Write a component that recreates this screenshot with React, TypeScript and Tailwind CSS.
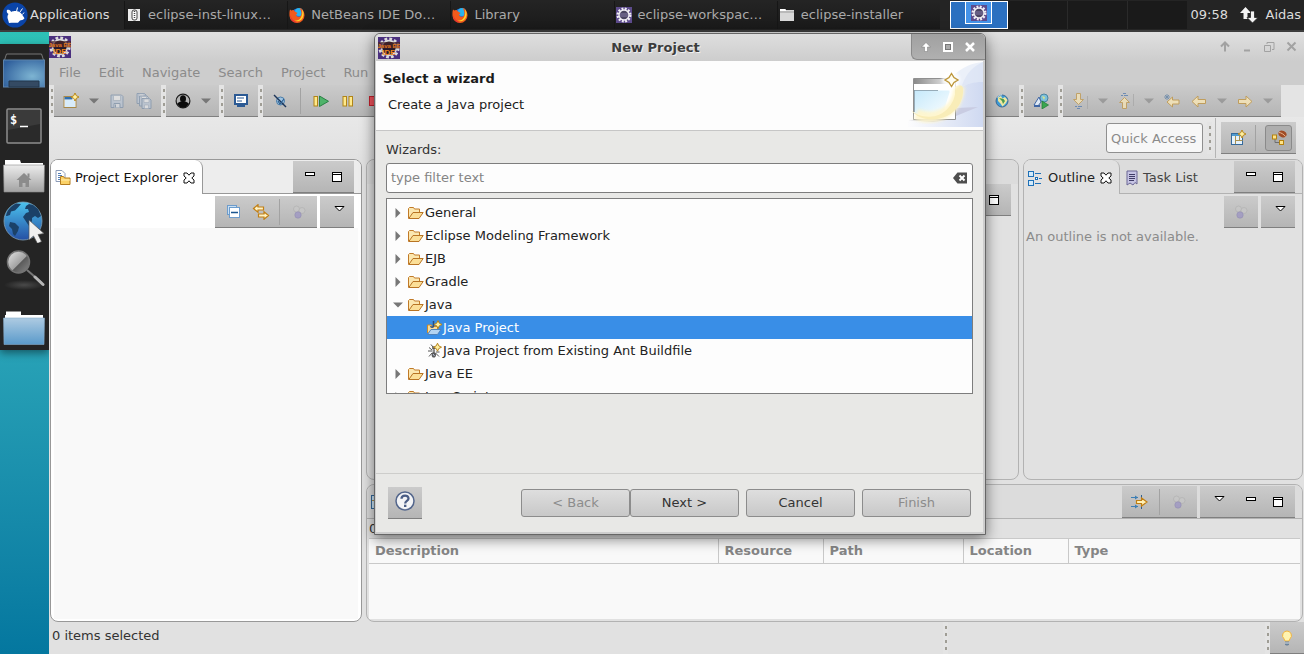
import React from "react";

type Kids = { children?: React.ReactNode };

/* ---------- small drawings ---------- */

const Svg = ({ w = 16, h = 16, className = "", children }: Kids & { w?: number; h?: number; className?: string }) => (
  <svg width={w} height={h} viewBox={`0 0 ${w} ${h}`} className={`block shrink-0 ${className}`} aria-hidden="true">
    {children}
  </svg>
);

const XfceMouse = () => (
  <Svg w={26} h={26}>
    <circle cx="13" cy="13" r="12.6" fill="#0a44a8" />
    <path d="M5 8c2-1 3.500.2 4.200 2 .6-.8 1.400-1 2.300-.8 3-.6 7.500.4 9.500 4.800l1.500 2.200-1.500 1.600-3 .6-2 2.400H9.500L7 21l-1-3.500C5 15.500 5.500 13 6.500 12 5 11 4.300 9.500 5 8z" fill="#fff" />
    <path d="M14.500 9.500l1-4M18 10l2.500-3.500M20.500 12.500l1.500-2" stroke="#fff" strokeWidth="1" />
  </Svg>
);

const ArchiveIcon = () => (
  <Svg>
    <rect x="2" y="2" width="12" height="12" fill="#ececec" />
    <rect x="6" y="3" width="5" height="10" rx="2" fill="#fff" stroke="#444" />
    <path d="M8.500 4v8" stroke="#444" strokeWidth="1.500" strokeDasharray="1 1" />
  </Svg>
);

const Firefox = () => (
  <Svg>
    <circle cx="8.500" cy="8" r="6.500" fill="#2a6fd6" />
    <circle cx="10" cy="5" r="4" fill="#28b4f0" />
    <path d="M1 2.500l1.500 1C4 2.500 5 3 6 4.500L8.500 6 7 8c1 2.500 4 2 5 .5C13 6 12 3 10.500.8c3 1 5 4 5 7.500A7.600 7.600 0 0 1 8 16 7.500 7.500 0 0 1 .5 9C.3 6 .6 4 1 2.500z" fill="#f25a1c" />
    <path d="M13 2.500c2.500 3 2 8-1 10.500-2 1.600-5 1.800-7 .6 3 .2 5.500-.6 7-3.100 1.300-2.500 1.500-5 1-8z" fill="#ffd42a" />
    <path d="M1.500 8c.5 4 3 6.500 7 7.400C4.500 16 1 13 1.500 8z" fill="#e8283c" />
  </Svg>
);

const GearIcon = () => (
  <Svg>
    <rect width="16" height="16" fill="#5d4b8c" />
    <circle cx="8" cy="8" r="6.300" fill="none" stroke="#f0eef4" strokeWidth="2.400" strokeDasharray="1.900 1.400" />
    <circle cx="8" cy="8" r="5" fill="#4a4462" stroke="#f0eef4" strokeWidth="1.400" />
    <path d="M4 7h8M4 9h8" stroke="#8379a6" strokeWidth="1" />
  </Svg>
);

const TaskFolder = () => (
  <Svg>
    <path d="M1 2h5l1 1h8v11H1z" fill="#d8d8d8" />
    <path d="M1 2h5l1 1v1H1z" fill="#fff" />
    <path d="M1 5h14" stroke="#9a9a9a" />
  </Svg>
);

const NetArrows = () => (
  <Svg w={18} h={18}>
    <path d="M5.500 1L0 7h3.500v6h4V7H11z" fill="#f4f4f4" />
    <path d="M12.500 17L7 11.500h3.500V5h4v6.500H18z" fill="#f4f4f4" stroke="#242424" strokeWidth=".8" />
  </Svg>
);

const EclipseIde = () => (
  <Svg w={22} h={22}>
    <rect width="22" height="22" fill="#4a2f7e" />
    <circle cx="11" cy="11" r="9.300" fill="none" stroke="#dcdcdc" strokeWidth="2.600" strokeDasharray="2.800 2.070" />
    <circle cx="11" cy="11" r="7.400" fill="#231a2c" stroke="#dcdcdc" strokeWidth="1.600" />
    <path d="M0 5h22v6.500H0z" fill="#4a2426" opacity=".7" />
    <text x="11" y="11" textAnchor="middle" fontSize="6" fontWeight="700" fontFamily="Liberation Sans, sans-serif" fill="#e0761e">Java EE</text>
    <text x="11" y="17.500" textAnchor="middle" fontSize="8" fontWeight="700" fontFamily="Liberation Sans, sans-serif" fill="#f0861e">IDE</text>
  </Svg>
);

const Spark = ({ x, y }: { x: number; y: number }) => (
  <path d={`M${x} ${y - 4}l1.300 2.700 2.700 1.300-2.700 1.300-1.300 2.700-1.300-2.700-2.700-1.300 2.700-1.300z`} fill="#fff0a0" stroke="#b8861c" strokeWidth="1" />
);

const NewIcon = () => (
  <Svg>
    <rect x="1" y="3.500" width="12" height="11" fill="#fff" stroke="#a8894a" />
    <path d="M1.500 4h8v2.500h-8z" fill="#2f6fb0" />
    <path d="M2 7h10v7H2z" fill="#d8ecfa" />
    <Spark x={12} y={4} />
  </Svg>
);

const floppy = "M.5.500h10.500l1.500 1.500v11h-12z";
const SaveIcon = () => (
  <Svg className="opacity-60">
    <g transform="translate(1.500 1.500)">
      <path d={floppy} fill="#b9c7d9" stroke="#7189a6" />
      <path d="M3 1h7v5H3z" fill="#f1f1f1" stroke="#8fa0b5" strokeWidth=".7" />
      <path d="M3.500 13V9h6v4" fill="#e0e4ea" stroke="#7189a6" />
      <path d="M5 10v3" stroke="#7189a6" />
    </g>
  </Svg>
);
const SaveAllIcon = () => (
  <Svg className="opacity-60">
    {[0, 2.5, 5].map((o) => (
      <g key={o} transform={`translate(${o} ${o})`}>
        <path d="M1 .500h7.500l1.500 1.500v8.500H1z" fill="#b9c7d9" stroke="#7189a6" />
        <path d="M3 1h5v3.500H3zM3.500 7h4v3.500h-4z" fill="#eef0f2" stroke="#8fa0b5" strokeWidth=".6" />
      </g>
    ))}
  </Svg>
);
const UserIcon = () => (
  <Svg>
    <circle cx="8" cy="8" r="6.900" fill="#b4b4b4" stroke="#1c1c1c" strokeWidth="1.200" />
    <path d="M2.300 10.500c1-1.300 2.500-1.500 3.700-2 1.300.8 2.700.8 4 0 1.200.5 2.700.7 3.700 2-1.200 3-3.400 4.200-5.700 4.200s-4.500-1.200-5.700-4.200z" fill="#0c0c0c" />
    <ellipse cx="8" cy="5.700" rx="3" ry="3.500" fill="#0c0c0c" />
  </Svg>
);
const MonitorIcon = () => (
  <Svg>
    <path d="M2 2h12v9H2z" fill="#fff" stroke="#2c5a94" strokeWidth="2" />
    <path d="M4 5h7M4 8h5" stroke="#2c5a94" />
    <path d="M4 12h8v2H4z" fill="#2c5a94" />
  </Svg>
);
const SkipIcon = () => (
  <Svg>
    <circle cx="8.500" cy="8" r="4" fill="#9fc3e0" stroke="#4a7ca8" />
    <path d="M2 2l12 12" stroke="#1d3558" strokeWidth="1.400" />
    <path d="M6 8l2 3 4-5" fill="none" stroke="#275d90" strokeWidth="1.200" />
  </Svg>
);
const ResumeIcon = () => (
  <Svg>
    <rect x="1" y="3.500" width="3.500" height="9.500" fill="#ffe98a" stroke="#b08418" />
    <path d="M6.500 3v10.500l9-5.200z" fill="#4fb36a" stroke="#2a8045" />
  </Svg>
);
const PauseIcon = () => (
  <Svg>
    <rect x="3" y="3.500" width="3.500" height="9.500" fill="#ffe98a" stroke="#b08418" />
    <rect x="9" y="3.500" width="3.500" height="9.500" fill="#ffe98a" stroke="#b08418" />
  </Svg>
);
const StopIcon = () => (
  <Svg>
    <rect x="2.500" y="3.500" width="9" height="9" fill="#f0525c" stroke="#c2202c" />
  </Svg>
);
const WorldIcon = () => (
  <Svg>
    <circle cx="8" cy="8" r="6" fill="#3f9bd8" stroke="#3d6c94" />
    <path d="M4 4.500l3-1.500 1.500 2.500L11 4l2.500 3-1.500 3-3.500 3.500-2-3L4 8z" fill="#eee8a0" />
    <path d="M5 5l3 3 1 3 2-3-1.500-2z" fill="#4b9c52" />
    <path d="M3.500 4.500c1-1.500 2.500-2.500 4.500-2.700" fill="none" stroke="#cfeaf8" />
  </Svg>
);
const ServiceIcon = () => (
  <Svg>
    <circle cx="11" cy="5" r="4" fill="#7cc0dc" stroke="#4a84a0" />
    <path d="M9 3l3 1-1 3z" fill="#d9e38b" />
    <path d="M1 12l5-8 2 5-3 4z" fill="#dfe9f5" stroke="#3f66a4" />
    <path d="M1 13h6" stroke="#3f66a4" strokeWidth="2" />
    <path d="M9 8v8l6.500-4z" fill="#3ba650" stroke="#1f7a35" strokeWidth=".7" />
  </Svg>
);
const arrowFill = { fill: "#f3e3b8", stroke: "#c09a52" };
const NextAnn = () => (
  <Svg w={18} className="opacity-80">
    <path d="M5.500.500h4v6h3l-5 5-5-5h3z" {...arrowFill} />
    <path d="M4 13.500h2M7 13.500h4M6 15.500h3" stroke="#5a7fb0" />
    <path d="M16.500 3v13" stroke="#a8a8a8" />
  </Svg>
);
const PrevAnn = () => (
  <Svg w={18} className="opacity-80">
    <path d="M5.500 15.500h4v-6h3l-5-5-5 5h3z" {...arrowFill} />
    <path d="M4 2.500h2M7 2.500h4M6 .500h3" stroke="#5a7fb0" />
    <path d="M16.500 1v12" stroke="#a8a8a8" />
  </Svg>
);
const BackIcon = () => (
  <Svg className="opacity-90">
    <path d="M1 8.500l6-5.500v3.500h7.500v4H7V14z" {...arrowFill} />
  </Svg>
);
const ForwardIcon = () => (
  <Svg className="opacity-90">
    <path d="M15 8.500L9 3v3.500H1.500v4H9V14z" {...arrowFill} />
  </Svg>
);
const LastEditIcon = () => (
  <Svg className="opacity-90">
    <path d="M3 9l5.500-5v3H15v4H8.500v3z" {...arrowFill} />
    <path d="M3 1v6M0 4h6M1 2l4 4M5 2L1 6" stroke="#6b89a8" strokeWidth=".9" />
  </Svg>
);
const DropArrow = ({ dim = false }: { dim?: boolean }) => (
  <Svg w={10} h={6} className={dim ? "opacity-50" : ""}>
    <path d="M0 .500h10L5 5.500z" fill="#777" />
  </Svg>
);

const MinIcon = () => (
  <Svg w={10} h={10}>
    <rect x=".5" y=".5" width="9" height="3" fill="#fff" stroke="#000" />
  </Svg>
);
const MaxIcon = () => (
  <Svg w={10} h={10}>
    <rect x=".5" y=".5" width="9" height="9" fill="#fff" stroke="#000" />
    <path d="M0 2.500h10" stroke="#000" />
  </Svg>
);
const MenuTri = () => (
  <Svg w={11} h={6}>
    <path d="M1 .500h9L5.500 5z" fill="#fff" stroke="#000" />
  </Svg>
);
const CollapseIcon = () => (
  <Svg>
    <rect x="1.500" y="1.500" width="9" height="9" fill="#c9e0f4" stroke="#6d9ccc" />
    <rect x="3.500" y="3.500" width="10" height="10" fill="#fff" stroke="#6d9ccc" />
    <path d="M5 8.500h7" stroke="#1b568f" strokeWidth="1.500" />
  </Svg>
);
const LinkIcon = () => (
  <Svg w={18}>
    <path d="M1.500 4.500L6 .7v2.300h5.500v3H6v2.300z" fill="#fff3c4" stroke="#c17f14" strokeWidth="1.200" />
    <path d="M16.500 11.500L12 7.700v2.300H6.500v3H12v2.300z" fill="#fff3c4" stroke="#c17f14" strokeWidth="1.200" />
  </Svg>
);
const FocusIcon = () => (
  <Svg className="opacity-70">
    <circle cx="5.500" cy="5" r="3" fill="#c8c8c8" stroke="#a4a4a4" strokeWidth=".6" />
    <circle cx="11" cy="6.500" r="3" fill="#c8c8c8" stroke="#a4a4a4" strokeWidth=".6" />
    <circle cx="7" cy="11" r="3.200" fill="#9a92c4" stroke="#8079ad" strokeWidth=".6" />
  </Svg>
);
const ViewX = () => (
  <Svg w={12} h={12}>
    <path d="M1 1h3l2 2.200L8 1h3v3L8.800 6 11 8v3H8L6 8.800 4 11H1V8l2.200-2L1 4z" fill="#fff" stroke="#111" />
  </Svg>
);
const ExplorerIcon = () => (
  <Svg>
    <path d="M1 .500h6l3 3v8H1z" fill="#fff" stroke="#8d9cb8" />
    <path d="M3 3.500h3M3 5.500h4M3 7.500h3M3 9.500h2" stroke="#5580b8" />
    <path d="M5.500 14.500v-8h3l1 1.500h5.500v6.500z" fill="#fbd268" stroke="#b47d20" />
    <path d="M6 10h9" stroke="#ffeeb0" />
  </Svg>
);
const OutlineIcon = () => (
  <Svg>
    <rect x="1.500" y="1.500" width="5" height="5" fill="#d4ebfb" stroke="#1d70b8" />
    <rect x="1.500" y="10.500" width="5" height="5" fill="#d4ebfb" stroke="#1d70b8" />
    <path d="M8 3.500h6M12 8.500h3M8 13.500h6" stroke="#1d70b8" />
    <rect x="8.500" y="7.500" width="2" height="2" fill="#fff" stroke="#1d70b8" />
  </Svg>
);
const TaskListIcon = () => (
  <Svg w={12}>
    <path d="M1 1h10v13l-2-1.500L7 15l-3-2-3 2z" fill="#c6c4e4" stroke="#6b6794" />
    <path d="M3 4.500h6M3 6.500h6M3 8.500h6M3 10.500h5" stroke="#3f3b66" />
  </Svg>
);
const PerspectiveIcon = () => (
  <Svg>
    <rect x="1.500" y="3.500" width="11" height="11" fill="#e6f2fb" stroke="#356a9c" />
    <path d="M2 5h10" stroke="#4f9bd0" strokeWidth="2" />
    <path d="M5.500 6v8M5.500 10.500h7M9.500 6v4" stroke="#a89152" />
    <Spark x={12} y={4} />
  </Svg>
);
const JavaEeIcon = () => (
  <Svg>
    <path d="M4 6v6.500h5" fill="none" stroke="#6e6e6e" />
    <rect x="1.500" y="5" width="4" height="4" fill="#ffe48a" stroke="#b5830f" />
    <rect x="8.500" y="10.500" width="4" height="4" fill="#ffe48a" stroke="#b5830f" />
    <ellipse cx="11.500" cy="4" rx="4.200" ry="3.200" transform="rotate(25 11.500 4)" fill="#a04c26" />
    <path d="M8 2.500c2 0 5 2 6.500 4" fill="none" stroke="#f0c098" strokeWidth=".9" />
  </Svg>
);
const SyncFilter = () => (
  <Svg w={17}>
    <path d="M0 3.500h7M0 12.500h7" stroke="#3d7fb5" />
    <path d="M4 1.500l3 2-3 2M4 10.500l3 2-3 2" fill="#3d7fb5" />
    <path d="M10.500 1v4M10.500 11v4" stroke="#2f5f90" />
    <path d="M5.500 6.500h5V4l5.500 4-5.500 4V9.500h-5z" fill="#fff1b8" stroke="#c17f14" strokeWidth="1.200" />
  </Svg>
);
const Bulb = () => (
  <Svg>
    <path d="M8 1a4.500 4.500 0 0 1 3 7.800L10 11H6L5 8.800A4.500 4.500 0 0 1 8 1z" fill="#fff3b0" stroke="#f2b43c" />
    <path d="M6 11.500h4v3l-1 1H7l-1-1z" fill="#6d8298" />
    <path d="M6 13h4" stroke="#d6dde4" />
  </Svg>
);
const MarkersIcon = () => (
  <Svg>
    <rect x="1.500" y="1.500" width="12" height="13" fill="#cde6f8" stroke="#356a9c" />
    <path d="M2 6.500h11" stroke="#a89152" />
  </Svg>
);

const FolderIcon = () => (
  <Svg>
    <path d="M.5 13.500v-10l1-1h4l1 1.500h5v3.500" fill="#fbe7b0" stroke="#c17a28" />
    <path d="M.8 13.500l4.200-6h10.200l-4.200 6z" fill="#fbdf98" stroke="#b87424" />
  </Svg>
);
const JavaProjectIcon = () => (
  <Svg>
    <path d="M1.500 13v-8h4l1 1.500h5V9" fill="#f9dd9a" stroke="#c98a2c" />
    <path d="M1.500 14.500l3.500-5h10l-3.500 5z" fill="#b4d4f2" stroke="#4f82bb" />
    <path d="M7.500 1v5c0 1.500-2.500 1.500-3 .3" fill="none" stroke="#2d4f7c" strokeWidth="1.500" />
    <Spark x={12} y={4.500} />
  </Svg>
);
const AntIcon = () => (
  <Svg>
    <path d="M3 4.500l3 2.500M2 8h4M3 13.500l3-3.500M13 13.500l-3.500-3.500M13.500 9H10M5 1.500l2 2.500" stroke="#555" />
    <ellipse cx="7.800" cy="5" rx="1.800" ry="1.800" fill="#5a5a5a" />
    <circle cx="7.800" cy="8" r="1.400" fill="#8a8a8a" />
    <ellipse cx="7.800" cy="11.800" rx="2.200" ry="2.800" fill="#5a5a5a" />
    <path d="M7 11l1.500 2" stroke="#b8c4e0" />
    <Spark x={11.5} y={4.200} />
  </Svg>
);
const ClearIcon = () => (
  <Svg>
    <path d="M1 8l4.500-5.500H15v11H5.500z" fill="#4e4e4e" />
    <path d="M7.500 5.500l5 5M12.500 5.500l-5 5" stroke="#fff" strokeWidth="2" />
  </Svg>
);
const HelpIcon = () => (
  <Svg w={20} h={20}>
    <circle cx="10" cy="10" r="9" fill="#f3f4f6" stroke="#53668c" strokeWidth="1.500" />
    <path d="M6.500 7.800C6.500 3.500 13.500 3.500 13.500 7.500c0 2.500-3.300 2.300-3.300 5" fill="none" stroke="#4a5d85" strokeWidth="2.300" />
    <rect x="9" y="13.700" width="2.400" height="2.300" fill="#4a5d85" />
  </Svg>
);
const WizardBanner = () => (
  <Svg w={75} h={65}>
    <defs>
      <linearGradient id="bn1" x1="0" x2="1" y1="0" y2="0">
        <stop offset="0" stopColor="#fcfcfd" />
        <stop offset="1" stopColor="#cfd9f1" />
      </linearGradient>
      <linearGradient id="bn2" x1="0" y1="0" x2="1" y2="1">
        <stop offset="0" stopColor="#c6e9fb" />
        <stop offset="1" stopColor="#fbfeff" />
      </linearGradient>
      <linearGradient id="bn3" x1="0" x2="1">
        <stop offset="0" stopColor="#8a8a8a" />
        <stop offset="1" stopColor="#f4f4f4" />
      </linearGradient>
      <filter id="bn4" x="-20%" y="-20%" width="140%" height="140%">
        <feGaussianBlur stdDeviation="1.500" />
      </filter>
    </defs>
    <path d="M75 0v65H0v-6l48-2C50 30 55 8 75 0z" fill="url(#bn1)" />
    <path d="M44 15C55 4 65 1 75 0v20c-10 0-16 2-22 6z" fill="#e3e9f7" opacity=".7" />
    <path d="M48 46l22-1-22 9z" fill="#c9cce2" />
    <path d="M0 58l45-1-20 3z" fill="#c8c9d4" />
    <path d="M5.500 16.500h42v41h-42z" fill="#fff" stroke="#909090" />
    <path d="M6 17h40v5H6z" fill="url(#bn3)" />
    <path d="M6.500 28.500h35v2L36 48l-10 6-19.500-2z" fill="url(#bn2)" />
    <path d="M6 28.500h24M6.500 28v22" stroke="#8298a6" strokeWidth=".8" />
    <path d="M8 52c12 6 28 3 37-8 4-6 6-11 6-19" fill="none" stroke="#fff6cc" strokeWidth="11" opacity=".9" filter="url(#bn4)" />
    <path d="M3 48c8 8 27 11 38-3 5-6 7-13 6-19 0-3 7-4 8 0 1 13-6 23-16 28-13 6-29 4-36-6z" fill="#f9edb8" />
    <circle cx="43" cy="18" r="9" fill="#fff" opacity=".8" filter="url(#bn4)" />
    <path d="M43.500 11.500l2.500 4 4 2.500-4 2.500-2.500 4-2.500-4-4-2.500 4-2.500z" fill="#fffdf0" stroke="#bd973c" strokeWidth="1.400" />
  </Svg>
);

/* ---------- dock drawings ---------- */

const DesktopIcon = () => (
  <Svg w={42} h={36}>
    <defs>
      <radialGradient id="dk1" cx=".7" cy=".6" r=".8">
        <stop offset="0" stopColor="#7db4d2" />
        <stop offset="1" stopColor="#2f5f9c" />
      </radialGradient>
    </defs>
    <path d="M1.500 7L3.500 1h35l2 6" fill="#222" stroke="#777" />
    <rect x=".5" y="7" width="41" height="27" fill="url(#dk1)" stroke="#5d83ab" />
    <path d="M6 34v-6h30v6z" fill="#344a63" stroke="#23364c" />
  </Svg>
);
const TerminalIcon = () => (
  <Svg w={36} h={36}>
    <rect x="1" y="1" width="34" height="34" rx="1" fill="#2a2a2a" stroke="#8d8d8d" strokeWidth="1.500" />
    <path d="M2 2h32v14L2 22z" fill="#3a3a3a" />
    <text x="4" y="16" fontSize="12" fontWeight="700" fontFamily="DejaVu Sans Mono, monospace" fill="#fff">$</text>
    <path d="M14 18.500h8" stroke="#fff" strokeWidth="1.500" />
  </Svg>
);
const HomeFolder = () => (
  <Svg w={42} h={34}>
    <defs>
      <linearGradient id="dk2" x1="0" x2="0" y1="0" y2="1">
        <stop offset="0" stopColor="#ececec" />
        <stop offset="1" stopColor="#a2a2a2" />
      </linearGradient>
    </defs>
    <path d="M2 6V1h15l1 3h22v5H2z" fill="#fff" />
    <path d="M.5 6h41l-.5 27H1z" fill="url(#dk2)" stroke="#8b8b8b" strokeWidth=".6" />
    <path d="M21 14l7.500 7H26v7h-3.500v-4h-3v4H16v-7h-2.500z" fill="#8c8c8c" />
    <path d="M24.500 14.500h2v4h-2z" fill="#8c8c8c" />
  </Svg>
);
const GlobeIcon = () => (
  <Svg w={42} h={42}>
    <defs>
      <linearGradient id="dk3" x1="0" x2="0" y1="0" y2="1">
        <stop offset="0" stopColor="#4cc3ee" />
        <stop offset="1" stopColor="#2550a4" />
      </linearGradient>
    </defs>
    <circle cx="20" cy="20" r="19" fill="url(#dk3)" stroke="#7f9fb8" strokeWidth=".8" />
    <path d="M3 15c1-6 5-10 10-12.500l5 .5-3 3.500-3 3-4 1-1 3.500-3 1zM7 21l5 1 4 4-1 4-3 5-2-2-1-5-3-3zM23 5l3-2 4 1 5 4 3 7-3 2-3-2-3 2 0 3-3 5-4-6-2-3 3-4 3-1-1-3-3 0z" fill="#1b4168" />
    <path d="M26 19v20l4.500-4 4 7.500 4-2-3.500-7 6-1z" fill="#f0f0f0" stroke="#555" strokeWidth=".7" />
  </Svg>
);
const MagnifierIcon = () => (
  <Svg w={42} h={42}>
    <defs>
      <linearGradient id="dk4" x1="0" x2="1" y1="0" y2="1">
        <stop offset="0" stopColor="#e8e8e8" />
        <stop offset=".55" stopColor="#a0a0a0" />
        <stop offset=".56" stopColor="#5a5a5a" />
        <stop offset="1" stopColor="#8a8a8a" />
      </linearGradient>
      <radialGradient id="dk5">
        <stop offset="0" stopColor="#4a4a4a" />
        <stop offset="1" stopColor="#242424" />
      </radialGradient>
    </defs>
    <ellipse cx="21" cy="36" rx="20" ry="5" fill="url(#dk5)" />
    <path d="M24 21l15 13" stroke="#777" strokeWidth="2" />
    <path d="M32 28l8 7.500" stroke="#b5b5b5" strokeWidth="3" strokeLinecap="round" />
    <circle cx="15.500" cy="13" r="11" fill="url(#dk4)" stroke="#747474" strokeWidth="1.500" />
  </Svg>
);
const BlueFolder = () => (
  <Svg w={42} h={34}>
    <defs>
      <linearGradient id="dk6" x1="0" x2="0" y1="0" y2="1">
        <stop offset="0" stopColor="#aecbe2" />
        <stop offset="1" stopColor="#5a9aca" />
      </linearGradient>
    </defs>
    <path d="M3 4V.500h15V4h22v5H2V4z" fill="#fff" />
    <path d="M.5 7h41l-.5 26.500H1z" fill="url(#dk6)" stroke="#86abc9" strokeWidth=".6" />
  </Svg>
);

/* ---------- building blocks ---------- */

const blockBg = "bg-linear-to-b from-[#cbcbcb] to-[#b5b5b5] border-b border-[#7f7f7f]";

const Block = ({ className = "", children }: Kids & { className?: string }) => (
  <div className={`flex h-8 shrink-0 items-center ${blockBg} ${className}`}>{children}</div>
);

const Tool = ({ label, className = "w-[23px]", children }: Kids & { label: string; className?: string }) => (
  <button type="button" aria-label={label} className={`flex h-full shrink-0 items-center justify-center ${className}`}>
    {children}
  </button>
);

const Grip = () => (
  <div className="flex h-8 w-[5px] shrink-0 flex-col items-center justify-center gap-1 bg-[#e4e4e4]">
    {[0, 1, 2, 3].map((i) => (
      <span key={i} className="h-[3px] w-[2px] bg-[#9f9d95]" />
    ))}
  </div>
);

const Sep = () => <span className="h-[26px] w-px shrink-0 bg-[#a2a2a2]" />;

const MinMax = () => (
  <>
    <Tool label="Minimize" className="w-[27px]"><MinIcon /></Tool>
    <Tool label="Maximize" className="w-[27px]"><MaxIcon /></Tool>
  </>
);

const Task = ({ icon, text }: { icon: React.ReactNode; text: string }) => (
  <button type="button" className="flex h-7 min-w-0 items-center gap-[6px] border-l border-[#161616] bg-linear-to-b from-[#242424] to-[#1a1a1a] pl-px text-left text-[#aaaaaa]">
    {icon}
    <span className="whitespace-nowrap">{text}</span>
  </button>
);

const TopPanel = () => (
  <header className="flex h-8 shrink-0 items-center border-b-2 border-[#3c3c3c] bg-[#242424] text-[#dcdcdc]">
    <button type="button" className="flex w-[124px] shrink-0 items-center gap-[2px] pl-[2px]">
      <XfceMouse />
      <span>Applications</span>
    </button>
    <nav className="grid w-[816px] shrink-0 grid-cols-5" aria-label="Tasks">
      <Task icon={<ArchiveIcon />} text="eclipse-inst-linux…" />
      <Task icon={<Firefox />} text="NetBeans IDE Do…" />
      <Task icon={<Firefox />} text="Library" />
      <Task icon={<GearIcon />} text="eclipse-workspac…" />
      <Task icon={<TaskFolder />} text="eclipse-installer" />
    </nav>
    <div className="ml-auto flex h-7 w-[237px] shrink-0 bg-[#1a1a1a]">
      <div className="flex w-[58px] justify-center border border-white bg-[#2b70c0]">
        <span className="flex h-[22px] w-[27px] items-center justify-center border border-t-0 border-white bg-[#4593e8]"><GearIcon /></span>
      </div>
      <div className="flex-1 border-r border-[#2a2a2a]" />
      <div className="flex-1 border-r border-[#2a2a2a]" />
      <div className="flex-1" />
    </div>
    <time className="ml-1 w-[49px] shrink-0">09:58</time>
    <NetArrows />
    <span className="mr-[3px] ml-2 shrink-0">Aidas</span>
  </header>
);

const dockItem = "flex w-full items-center justify-center pr-[2px]";

const Dock = () => (
  <aside className="w-[49px] shrink-0 pt-3">
    <nav aria-label="Dock" className="flex flex-col items-center bg-[#242424] shadow-[0_3px_8px_rgba(0,0,0,0.45)]">
      <a href="#desktop" aria-label="Desktop" className={`${dockItem} h-[54px]`}><DesktopIcon /></a>
      <a href="#terminal" aria-label="Terminal" className={`${dockItem} h-14`}><TerminalIcon /></a>
      <a href="#home" aria-label="Home" className={`${dockItem} h-11`}><HomeFolder /></a>
      <a href="#browser" aria-label="Browser" className={`${dockItem} h-12`}><GlobeIcon /></a>
      <a href="#search" aria-label="Search" className={`${dockItem} h-12`}><MagnifierIcon /></a>
      <a href="#files" aria-label="Files" className={`${dockItem} h-14 pt-3`}><BlueFolder /></a>
    </nav>
  </aside>
);

const MainTitle = () => (
  <div className="flex h-[29px] shrink-0 items-center justify-between bg-linear-to-b from-[#e0e0e0] to-[#cdcdcd] pr-[6px]">
    <EclipseIde />
    <Svg w={79} h={12}>
      <path d="M6 10.500V2M2 5.500L6 1.500l4 4" fill="none" stroke="#a2a2a2" strokeWidth="2" />
      <path d="M25 9.500h6" stroke="#a2a2a2" strokeWidth="2" />
      <path d="M45.500 4.500h6v6h-6zM48 3V1.500h7v7h-2" fill="none" stroke="#a2a2a2" />
      <path d="M68.500 1.500l8 8M76.500 1.500l-8 8" stroke="#a2a2a2" strokeWidth="2" />
    </Svg>
  </div>
);

const menus = ["File", "Edit", "Navigate", "Search", "Project", "Run"];

const MenuBar = () => (
  <nav aria-label="Menu" className="flex h-6 shrink-0 items-center gap-[18px] bg-[#cdcdcd] pl-[10px] text-[#8b8b8b]">
    {menus.map((m) => (
      <button key={m} type="button">{m}</button>
    ))}
  </nav>
);

const Toolbar = () => (
  <div className="flex shrink-0 bg-[#e4e4e4]">
    <Grip />
    <Block className="w-[107px] pl-[5px]">
      <Tool label="New"><NewIcon /></Tool>
      <Tool label="New menu"><DropArrow /></Tool>
      <Tool label="Save"><SaveIcon /></Tool>
      <Tool label="Save all" className="ml-1 w-[23px]"><SaveAllIcon /></Tool>
    </Block>
    <Grip />
    <Block className="w-[53px] pl-[5px]">
      <Tool label="Account"><UserIcon /></Tool>
      <Tool label="Account menu"><DropArrow /></Tool>
    </Block>
    <Grip />
    <Block><Tool label="Console" className="w-[34px]"><MonitorIcon /></Tool></Block>
    <Grip />
    <Block className="flex-1">
      <Tool label="Skip breakpoints" className="mr-[3px] w-[34px]"><SkipIcon /></Tool>
      <Sep />
      <Tool label="Resume" className="ml-2 w-[23px]"><ResumeIcon /></Tool>
      <Tool label="Suspend" className="ml-1 w-[23px]"><PauseIcon /></Tool>
      <Tool label="Stop" className="ml-1 w-[23px]"><StopIcon /></Tool>
      <Tool label="Web browser" className="ml-auto w-[34px]"><WorldIcon /></Tool>
    </Block>
    <Grip />
    <Block><Tool label="Web services" className="w-[34px]"><ServiceIcon /></Tool></Block>
    <Grip />
    <Block className="mr-[23px] w-[218px] pl-[5px]">
      <Tool label="Next annotation"><NextAnn /></Tool>
      <Tool label="Next annotation menu"><DropArrow dim /></Tool>
      <Tool label="Previous annotation"><PrevAnn /></Tool>
      <Tool label="Previous annotation menu"><DropArrow dim /></Tool>
      <Tool label="Last edit"><LastEditIcon /></Tool>
      <Tool label="Back" className="ml-1 w-[23px]"><BackIcon /></Tool>
      <Tool label="Back menu"><DropArrow dim /></Tool>
      <Tool label="Forward"><ForwardIcon /></Tool>
      <Tool label="Forward menu"><DropArrow dim /></Tool>
    </Block>
  </div>
);

const QuickRow = () => (
  <div className="flex h-[42px] shrink-0 items-center justify-end bg-linear-to-b from-[#e8e8e8] to-[#e1e1e1] pr-2">
    <input
      aria-label="Quick Access"
      placeholder="Quick Access"
      className="h-[30px] w-[97px] rounded-[3px] border border-[#8f8f8f] bg-[#f7f7f7] px-1 placeholder:text-[#8b8b8b]"
    />
    <div className="ml-1 flex h-10 items-center gap-[3px]">
      <Grip />
      <span className="h-10 w-px bg-[#b4b4b4]" />
    </div>
    <Block className="ml-[5px] w-[75px] pr-1">
      <Tool label="Open perspective" className="w-[34px]"><PerspectiveIcon /></Tool>
      <Sep />
      <button type="button" aria-label="Java EE perspective" aria-pressed="true" className="ml-auto flex h-[26px] w-[27px] items-center justify-center rounded-[3px] border border-[#8a8a8a] bg-[#aeaeae]">
        <JavaEeIcon />
      </button>
    </Block>
  </div>
);

const ProjectExplorer = () => (
  <section className="flex w-[312px] shrink-0 flex-col overflow-hidden rounded-lg border border-[#989898] bg-white">
    <div className="flex h-[34px] shrink-0 bg-[#ededed]">
      <div className="flex w-[152px] items-center gap-1 rounded-tr-lg border-r border-[#989898] bg-white pt-px pl-1 text-[#111]">
        <ExplorerIcon />
        <h2 className="whitespace-nowrap">Project Explorer</h2>
        <button type="button" aria-label="Close Project Explorer" className="ml-px"><ViewX /></button>
      </div>
      <div className="flex flex-1 items-start justify-end border-b border-[#989898] pt-px pr-[7px]">
        <Block className="w-[61px] pl-[3px]"><MinMax /></Block>
      </div>
    </div>
    <div className="flex shrink-0 justify-end gap-[3px] pt-[2px] pr-[7px]">
      <Block className="w-[102px] pl-[5px]">
        <Tool label="Collapse all" className="w-[27px]"><CollapseIcon /></Tool>
        <Tool label="Link with editor" className="mr-[5px] w-[27px]"><LinkIcon /></Tool>
        <Sep />
        <Tool label="Focus" className="flex-1"><FocusIcon /></Tool>
      </Block>
      <Block className="w-[34px] pl-[6px]"><Tool label="View menu" className="w-[27px] pb-[6px]"><MenuTri /></Tool></Block>
    </div>
    <div className="mx-[3px] mb-[2px] flex-1 bg-[#f9f9f9]" />
  </section>
);

const EditorArea = () => (
  <section aria-label="Editor" className="flex min-w-0 flex-1 flex-col rounded-lg border border-[#b2b2b2] bg-[#e1e1e1]">
    <div className="h-6 shrink-0 rounded-t-lg bg-[#dcdcdc]" />
    <div className="flex justify-end pr-[7px]">
      <Block className="w-[61px] pl-[3px]"><MinMax /></Block>
    </div>
  </section>
);

const OutlineView = () => (
  <section className="flex w-[280px] shrink-0 flex-col overflow-hidden rounded-lg border border-[#b2b2b2] bg-[#e1e1e1]">
    <div className="flex h-[34px] shrink-0 bg-[#dcdcdc]">
      <div className="flex w-24 items-center gap-[5px] rounded-tr-lg border-r border-[#b2b2b2] bg-[#e1e1e1] pt-px pl-[3px] text-[#222]">
        <OutlineIcon />
        <h2>Outline</h2>
        <button type="button" aria-label="Close Outline"><ViewX /></button>
      </div>
      <div className="flex flex-1 items-start justify-between border-b border-[#b2b2b2] pt-px pr-[7px] pl-[6px]">
        <div className="flex h-[33px] items-center gap-[5px] text-[#444]">
          <TaskListIcon />
          <span>Task List</span>
        </div>
        <Block className="w-[61px] pl-[3px]"><MinMax /></Block>
      </div>
    </div>
    <div className="flex shrink-0 justify-end gap-[3px] pt-[2px] pr-[7px]">
      <Block><Tool label="Focus" className="w-[34px]"><FocusIcon /></Tool></Block>
      <Block className="w-[34px] pl-[6px]"><Tool label="View menu" className="w-[27px] pb-[6px]"><MenuTri /></Tool></Block>
    </div>
    <p className="px-[2px] leading-[18px] text-[#8b8b8b]">An outline is not available.</p>
  </section>
);

const MarkersView = () => (
  <section className="flex h-[138px] shrink-0 flex-col rounded-lg border border-[#b2b2b2] bg-[#e1e1e1]">
    <div className="flex h-[34px] shrink-0 items-start justify-between rounded-t-lg border-b border-[#b2b2b2] bg-[#dcdcdc] pt-px pr-[7px]">
      <div className="flex h-8 items-center pl-[3px]"><MarkersIcon /></div>
      <div className="flex gap-[3px]">
        <Block className="w-[75px]">
          <Tool label="Filter" className="mr-[3px] w-[34px]"><SyncFilter /></Tool>
          <Sep />
          <Tool label="Focus" className="flex-1"><FocusIcon /></Tool>
        </Block>
        <Block className="w-[95px] pl-[6px]">
          <Tool label="View menu" className="mr-1 w-[27px] pb-[6px]"><MenuTri /></Tool>
          <MinMax />
        </Block>
      </div>
    </div>
    <p className="h-[19px] shrink-0 px-[2px] leading-[19px] text-[#333]">0 items</p>
    <div className="mx-[2px] mb-[2px] flex-1 border-t border-[#c9c9c9] bg-[#f9f9f9]">
      <table className="w-full table-fixed border-collapse text-left text-[#858585]">
        <thead>
          <tr className="h-6 border-b border-[#c9c9c9]">
            <th className="w-[349px] pl-[6px] font-bold">Description</th>
            <th className="w-[105px] border-l border-[#c9c9c9] pl-[6px] font-bold">Resource</th>
            <th className="w-[140px] border-l border-[#c9c9c9] pl-[6px] font-bold">Path</th>
            <th className="w-[105px] border-l border-[#c9c9c9] pl-[6px] font-bold">Location</th>
            <th className="border-l border-[#c9c9c9] pl-[6px] font-bold">Type</th>
          </tr>
        </thead>
      </table>
    </div>
  </section>
);

const StatusBar = () => (
  <footer className="flex h-8 shrink-0 items-center text-[#333]">
    <span className="flex-1 pb-[5px] pl-[3px]">0 items selected</span>
    <Grip />
    <span className="w-[317px]" />
    <Grip />
    <Block><Tool label="Tip of the day" className="w-[34px]"><Bulb /></Tool></Block>
  </footer>
);

type Node = { name: string; kind: "closed" | "open" | "java" | "ant" };
const nodes: Node[] = [
  { name: "General", kind: "closed" },
  { name: "Eclipse Modeling Framework", kind: "closed" },
  { name: "EJB", kind: "closed" },
  { name: "Gradle", kind: "closed" },
  { name: "Java", kind: "open" },
  { name: "Java Project", kind: "java" },
  { name: "Java Project from Existing Ant Buildfile", kind: "ant" },
  { name: "Java EE", kind: "closed" },
  { name: "JavaScript", kind: "closed" },
];

const TreeRow = ({ name, kind }: Node) => {
  const leaf = kind === "java" || kind === "ant";
  const selected = kind === "java";
  return (
    <li
      role="treeitem"
      aria-selected={selected}
      aria-expanded={leaf ? undefined : kind === "open"}
      className={`flex h-[23px] items-center ${leaf ? "pl-[39px]" : "pl-[6px]"} ${selected ? "bg-[#398ee7] text-white" : "text-[#222]"}`}
    >
      {!leaf && (
        <Svg w={15} h={10}>
          {kind === "open" ? <path d="M0 2.500h10L5 7.500z" fill="#777" /> : <path d="M2.500 0v10l5-5z" fill="#777" />}
        </Svg>
      )}
      {kind === "java" ? <JavaProjectIcon /> : kind === "ant" ? <AntIcon /> : <FolderIcon />}
      <span className="ml-px whitespace-nowrap">{name}</span>
    </li>
  );
};

const dialogBtn = "h-7 w-[109px] rounded-[3px] border border-[#8c8c8c] bg-linear-to-b from-[#dedede] to-[#c8c8c8]";

const Dialog = () => (
  <div
    role="dialog"
    aria-labelledby="dlg-title"
    className="absolute top-[33px] left-[374px] w-[612px] overflow-hidden rounded-t-md border border-[#666] bg-[#cdcdcd] shadow-[0_4px_14px_rgba(0,0,0,0.5)]"
  >
    <div className="flex h-[27px] bg-linear-to-b from-[#dedede] to-[#cdcdcd] pl-[3px]">
      <div className="flex w-[22px] items-center"><EclipseIde /></div>
      <h1 id="dlg-title" className="flex-1 text-center leading-[28px] font-bold text-[#3c3c3c] text-shadow-[1px_1px_0_#f0f0f0]">New Project</h1>
      <div className="flex h-[26px] w-[74px] items-center justify-center gap-3 rounded-bl-md border-b border-l border-[#8a8a8a] bg-linear-to-b from-[#a0a0a0] to-[#b0b0b0] pr-[2px]">
        <button type="button" aria-label="Shade"><Svg w={10} h={10}><path d="M5 .500l4.500 4.500H6.500v4.500h-3V5H.500z" fill="#fff" stroke="#777" strokeWidth=".5" /></Svg></button>
        <button type="button" aria-label="Maximize window"><Svg w={10} h={10}><rect x="1" y="1" width="8" height="8" fill="#aaa" stroke="#fff" strokeWidth="2" /><rect x="2.500" y="2.500" width="5" height="5" fill="none" stroke="#777" /></Svg></button>
        <button type="button" aria-label="Close"><Svg w={10} h={10}><path d="M1 1l8 8M9 1L1 9" stroke="#fff" strokeWidth="2.500" /></Svg></button>
      </div>
    </div>

    <div className="mr-[2px] mb-[2px] ml-px bg-[#e8e8e6]">
      <div className="flex h-[70px] justify-between border-b border-[#c6c6c6] bg-[#fdfdfd] pl-[7px] text-[#1c1c1c]">
        <div>
          <h2 className="pt-2 font-bold">Select a wizard</h2>
          <p className="pt-[6px] pl-[5px]">Create a Java project</p>
        </div>
        <div className="pt-px"><WizardBanner /></div>
      </div>

      <div className="px-[10px] pt-[9px]">
        <label htmlFor="filter" className="block text-[#333]">Wizards:</label>
        <div className="mt-[3px] flex h-[30px] items-center rounded-[3px] border border-[#7d7d7d] bg-[#fdfdfd] pr-1 pl-1">
          <input id="filter" placeholder="type filter text" className="min-w-0 flex-1 bg-transparent outline-none placeholder:text-[#858585]" />
          <button type="button" aria-label="Clear"><ClearIcon /></button>
        </div>
        <ul role="tree" aria-label="Wizards" className="mt-[5px] h-[196px] overflow-hidden border border-[#7d7d7d] bg-[#fdfdfd] pt-[2px]">
          {nodes.map((n) => (
            <TreeRow key={n.name} {...n} />
          ))}
        </ul>
      </div>

      <div className="mt-[79px] flex h-[59px] items-center border-t border-[#cdcdcb] px-3">
        <Block><Tool label="Help" className="w-[34px] pb-1"><HelpIcon /></Tool></Block>
        <div className="ml-auto flex text-[#333]">
          <button type="button" disabled className={`${dialogBtn} text-[#8c8c8c]`}>&lt; Back</button>
          <button type="button" className={dialogBtn}>Next &gt;</button>
          <button type="button" className={`${dialogBtn} ml-[7px]`}>Cancel</button>
          <button type="button" disabled className={`${dialogBtn} ml-[7px] text-[#8c8c8c]`}>Finish</button>
        </div>
      </div>
    </div>
  </div>
);

export default function App() {
  return (
    <div className="relative flex min-h-screen flex-col bg-linear-to-b from-[#2ec4b6] via-[#2aa5b8] to-[#04779f] font-['DejaVu_Sans',sans-serif] text-[13px] leading-5">
      <TopPanel />
      <div className="flex flex-1">
        <Dock />
        <main className="flex min-w-0 flex-1 flex-col bg-[#e1e1e1]">
          <MainTitle />
          <MenuBar />
          <Toolbar />
          <QuickRow />
          <div className="flex flex-1 gap-1 pl-px">
            <ProjectExplorer />
            <div className="flex min-w-0 flex-1 flex-col gap-1 pr-px">
              <div className="flex flex-1 gap-1">
                <EditorArea />
                <OutlineView />
              </div>
              <MarkersView />
            </div>
          </div>
          <StatusBar />
        </main>
      </div>
      <Dialog />
    </div>
  );
}
